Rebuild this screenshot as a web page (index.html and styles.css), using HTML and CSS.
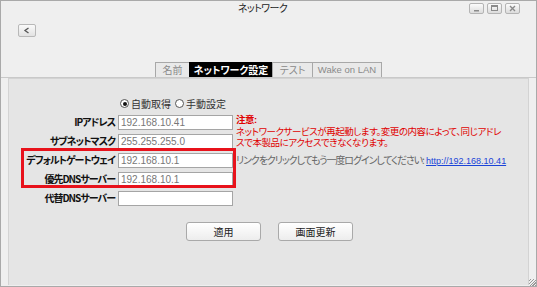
FILE: index.html
```html
<!DOCTYPE html>
<html lang="ja">
<head>
<meta charset="utf-8">
<title>ネットワーク</title>
<link rel="stylesheet" href="styles.css">
</head>
<body>
<div class="window">
  <div class="titlebar">
    <div class="title">ネットワーク</div>
    <div class="controls">
      <span class="wbtn"><svg width="15" height="11" viewBox="0 0 15 11"><rect x="5" y="7" width="5" height="1.5" fill="#8a8a8a"/></svg></span>
      <span class="wbtn"><svg width="15" height="11" viewBox="0 0 15 11"><rect x="4.5" y="2.5" width="6" height="5" fill="none" stroke="#8a8a8a" stroke-width="1"/><rect x="4.5" y="2.5" width="6" height="1.5" fill="#8a8a8a"/></svg></span>
      <span class="wbtn"><svg width="15" height="11" viewBox="0 0 15 11"><path d="M5 3 L10 8 M10 3 L5 8" stroke="#8a8a8a" stroke-width="1.4"/></svg></span>
    </div>
  </div>
  <div class="toolbar">
    <span class="back"><svg width="16" height="11" viewBox="0 0 16 11"><path d="M9.5 3 L6 5.5 L9.5 8" fill="none" stroke="#555" stroke-width="1.3"/></svg></span>
  </div>
  <div class="tabs">
    <span class="tab t1">名前</span>
    <span class="tab t2 active">ネットワーク設定</span>
    <span class="tab t3">テスト</span>
    <span class="tab t4 latin">Wake on LAN</span>
  </div>
  <div class="panel">
    <div class="form">
      <div class="radios">
        <span class="radio on"></span><span class="rlabel">自動取得</span>
        <span class="radio"></span><span class="rlabel">手動設定</span>
      </div>
      <label class="lbl r2">IPアドレス</label>
      <span class="field r2">192.168.10.41</span>
      <label class="lbl r3">サブネットマスク</label>
      <span class="field r3">255.255.255.0</span>
      <label class="lbl r4">デフォルトゲートウェイ</label>
      <span class="field r4">192.168.10.1</span>
      <label class="lbl r5">優先DNSサーバー</label>
      <span class="field r5">192.168.10.1</span>
      <label class="lbl r6">代替DNSサーバー</label>
      <span class="field r6"></span>
      <div class="note">
        <div class="nl"><b>注意:</b></div>
        <div class="nl">ネットワークサービスが再起動します。変更の内容によって、同じアドレ</div>
        <div class="nl">スで本製品にアクセスできなくなります。</div>
      </div>
      <div class="relogin"><span class="jp">リンクをクリックしてもう一度ログインしてください:</span> <a href="#">http://192.168.10.41</a></div>
    </div>
    <div class="buttons">
      <span class="btn">適用</span>
      <span class="btn">画面更新</span>
    </div>
  </div>
  <div class="grip"></div>
</div>
<div class="highlight"></div>
</body>
</html>
```
FILE: styles.css
```css
html, body {
  margin: 0;
  padding: 0;
}
body {
  width: 537px;
  height: 287px;
  position: relative;
  overflow: hidden;
  font-family: "Noto Sans CJK JP", "Liberation Sans", sans-serif;
  font-feature-settings: "palt" 1;
  font-size: 10px;
  color: #222;
  background: #fff;
}
.window {
  box-sizing: border-box;
  width: 537px;
  height: 287px;
  border: 1px solid #a9a9a9;
  background: #efefef;
  display: flex;
  flex-direction: column;
  position: relative;
}
.titlebar {
  height: 15px;
  position: relative;
  display: flex;
  justify-content: center;
  align-items: flex-start;
}
.title {
  font-size: 10px;
  line-height: 14px;
  margin-left: -12px;
  letter-spacing: -0.6px;
  color: #222;
}
.controls {
  position: absolute;
  right: 16px;
  top: 2px;
  display: flex;
  gap: 3px;
}
.wbtn {
  display: block;
  width: 15px;
  height: 11px;
  box-sizing: border-box;
  border: 1px solid #b4b4b4;
  border-radius: 2px;
  background: linear-gradient(#fbfbfb, #dcdcdc);
}
.wbtn svg { display: block; margin: -1px; }
.toolbar {
  height: 46px;
  padding-left: 17px;
  padding-top: 8px;
  box-sizing: border-box;
}
.back {
  display: block;
  width: 18px;
  height: 13px;
  box-sizing: border-box;
  border: 1px solid #b8b8b8;
  border-radius: 2px;
  background: linear-gradient(#fafafa, #e2e2e2);
}
.back svg { display: block; }
.tabs {
  display: flex;
  justify-content: center;
  padding-left: 1px;
  height: 16px;
  box-sizing: border-box;
  padding-bottom: 1px;
  border-bottom: 1px solid #c9c9c9;
}
.tab {
  box-sizing: border-box;
  height: 15px;
  line-height: 13px;
  border: 1px solid #a8a8a8;
  border-bottom: none;
  margin-left: -1px;
  background: #e9e9e9;
  color: #8a8a8a;
  text-align: center;
  font-size: 10px;
  white-space: nowrap;
}
.t1 { width: 35px; }
.t2 { width: 84px; }
.t3 { width: 41px; }
.t4 { width: 70px; }
.tab.active {
  background: #000;
  color: #fff;
  border-color: #000;
  font-weight: bold;
}
.tab.latin {
  font-family: "Liberation Sans", Arial, sans-serif;
  font-size: 9.5px;
}
.panel {
  flex: 1;
  margin: 0 7px 1px 7px;
  border: 1px solid #d3d3d3;
  border-bottom: none;
  background: #e5e5e5;
  display: flex;
  flex-direction: column;
}
.form {
  display: grid;
  grid-template-columns: 106px 115px auto;
  column-gap: 3px;
  row-gap: 5px;
  grid-template-rows: 13px repeat(5, 14px);
  padding-top: 18px;
}
.radios {
  grid-column: 2 / 4;
  grid-row: 1;
  display: flex;
  align-items: center;
  margin-left: 2px;
  font-size: 10px;
  color: #333;
}
.radio {
  width: 9px;
  height: 9px;
  box-sizing: border-box;
  border: 1px solid #555;
  border-radius: 50%;
  background: #fff;
  margin-right: 2px;
  position: relative;
}
.radio.on::after {
  content: "";
  position: absolute;
  left: 1.5px;
  top: 1.5px;
  width: 4px;
  height: 4px;
  border-radius: 50%;
  background: #111;
}
.rlabel { margin-right: 4px; }
.lbl {
  grid-column: 1;
  text-align: right;
  font-weight: bold;
  font-size: 10px;
  line-height: 14px;
  letter-spacing: -1px;
  color: #111;
  white-space: nowrap;
}
.field {
  grid-column: 2;
  box-sizing: border-box;
  height: 15px;
  border: 1px solid #a5a5a5;
  background: #fff;
  font-family: "Liberation Sans", Arial, sans-serif;
  font-size: 10px;
  line-height: 13px;
  padding-left: 2px;
  color: #777;
}
.r2 { grid-row: 2; }
.r3 { grid-row: 3; }
.r4 { grid-row: 4; }
.r5 { grid-row: 5; }
.r6 { grid-row: 6; }
.note {
  grid-column: 3;
  grid-row: 2 / 4;
  color: #e00000;
  font-family: "Liberation Sans", "Noto Sans CJK JP", sans-serif;
  font-size: 9.5px;
  margin-top: -1px;
}
.nl {
  height: 11.5px;
  line-height: 11.5px;
  white-space: nowrap;
  letter-spacing: -0.45px;
}
.note b { font-weight: bold; }
.relogin {
  grid-column: 3;
  grid-row: 4;
  font-size: 10px;
  line-height: 14px;
  color: #666;
  white-space: nowrap;
}
.relogin .jp { letter-spacing: -1.1px; }
.relogin a {
  color: #1a44d8;
  text-decoration: underline;
  font-family: "Liberation Sans", Arial, sans-serif;
  font-size: 9px;
}
.buttons {
  display: flex;
  justify-content: center;
  gap: 17px;
  margin-top: 17px;
  padding-left: 2px;
}
.btn {
  box-sizing: border-box;
  width: 75px;
  height: 19px;
  line-height: 17px;
  text-align: center;
  border: 1px solid #a9a9a9;
  border-radius: 3px;
  background: linear-gradient(#ffffff, #ededed);
  font-size: 10px;
  color: #222;
}
.grip {
  position: absolute;
  right: 0;
  bottom: 0;
  width: 7px;
  height: 7px;
  background: repeating-linear-gradient(135deg, transparent 0 1px, #999 1px 2px);
}
.highlight {
  position: absolute;
  left: 21px;
  top: 148px;
  width: 209px;
  height: 34px;
  border: 3px solid #e8121b;
}
```
